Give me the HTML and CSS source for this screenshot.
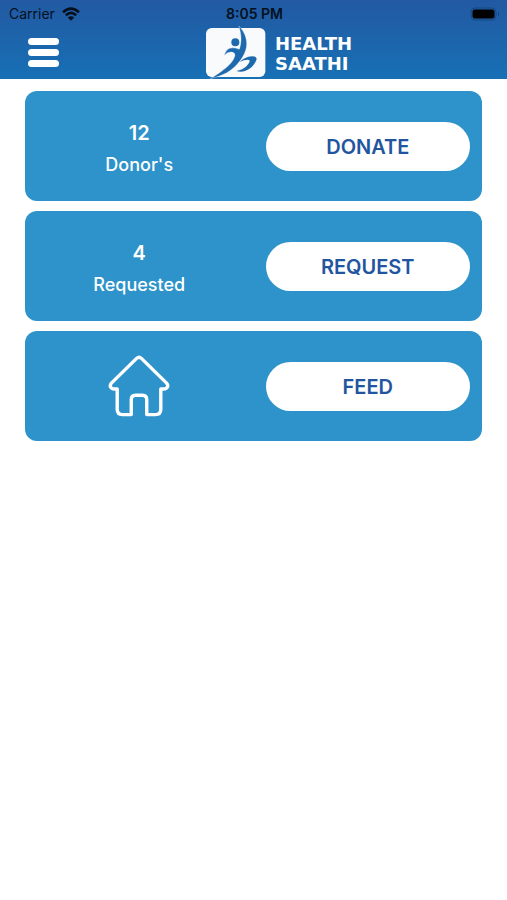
FILE: index.html
```html
<!DOCTYPE html>
<html lang="en">
<head>
<meta charset="utf-8">
<meta name="viewport" content="width=device-width, initial-scale=1">
<title>Health Saathi</title>
<link rel="stylesheet" href="styles.css">
</head>
<body>
<header class="header">
  <div class="status">
    <div class="carrier">
      <span>Carrier</span>
      <svg class="wifi" viewBox="0 0 18 14" aria-hidden="true">
        <path d="M1 5.200Q9-2 17 5.200M3.800 8.200Q9 3.600 14.200 8.200" fill="none" stroke="currentColor" stroke-width="2.500"/>
        <path d="M9 13.800 5.800 10.600Q9 8 12.200 10.600Z" fill="currentColor"/>
      </svg>
    </div>
    <time class="clock">8:05 PM</time>
    <svg class="battery" viewBox="0 0 30 14" aria-hidden="true">
      <rect x="1" y="1" width="25" height="12" rx="4" fill="none" stroke="#103f70" stroke-opacity=".7"/>
      <rect x="2.500" y="2.500" width="22" height="9" rx="2.500"/>
      <path d="M28 5q2 2 0 4z" fill="#103f70"/>
    </svg>
  </div>
  <div class="bar">
    <button class="menu" type="button" aria-label="Menu">
      <span class="line"></span><span class="line"></span><span class="line"></span>
    </button>
    <div class="brand">
      <svg class="mark" viewBox="30 33 183 159" aria-hidden="true">
        <rect x="33" y="39" width="178" height="147" rx="17" fill="#f8fafc"/>
        <path d="M131 32C139 56 141 79 133 103Q115 96 104 100Q92 105 88 121Q98 110 109 111Q120 112 120 121C116 140 98 156 78 170Q61 182 46 191Q71 186 94 174C119 160 143 134 152 106C161 77 149 50 131 32Z" fill="#1c69ae" stroke="#f8fafc" stroke-width="1"/>
        <path d="M134 141Q149 126 171 124Q190 124 183 137Q174 159 150 168Q137 173 124 168Q143 165 155 153Q168 139 162 135Q151 133 134 141Z" fill="#1c69ae"/>
        <circle cx="121" cy="82" r="12" fill="#1c69ae"/>
      </svg>
      <div class="name"><span>HEALTH</span><span>SAATHI</span></div>
    </div>
  </div>
</header>
<main class="cards">
  <section class="card">
    <div class="info"><strong class="count">12</strong><span class="label">Donor's</span></div>
    <div class="action"><button class="pill" type="button">DONATE</button></div>
  </section>
  <section class="card">
    <div class="info"><strong class="count">4</strong><span class="label">Requested</span></div>
    <div class="action"><button class="pill" type="button">REQUEST</button></div>
  </section>
  <section class="card">
    <div class="info">
      <svg class="home" viewBox="0 0 64 64" aria-hidden="true">
        <path d="M29.500 3.500Q32 1 34.500 3.500L60.500 29Q63 32 60.500 34Q59 35.500 54.500 35V56Q54.500 61.500 49 61.500H40V46Q40 41.500 35.500 41.500H28.500Q24 41.500 24 46V61.500H15Q9.500 61.500 9.500 56V35Q5 35.500 3.500 34Q1 32 3.500 29Z" fill="none" stroke="#fff" stroke-width="3.500" stroke-linejoin="round"/>
      </svg>
    </div>
    <div class="action"><button class="pill" type="button">FEED</button></div>
  </section>
</main>
</body>
</html>
```
FILE: styles.css
```css
* {
  box-sizing: border-box;
}

body {
  margin: 0;
  background: #fff;
  font-family: Inter, "Liberation Sans", sans-serif;
}

.header {
  background: linear-gradient(#2259a2, #1770b5);
}

.status {
  display: grid;
  grid-template-columns: 1fr auto 1fr;
  align-items: center;
  height: 26px;
  padding: 2px 7px 0 9px;
  font-size: 14px;
  line-height: 24px;
  color: #04101e;
}

.carrier {
  display: flex;
  align-items: center;
  gap: 7px;
}

.wifi {
  width: 18px;
  height: 14px;
}

.clock {
  font-weight: 600;
}

.battery {
  justify-self: end;
  width: 30px;
  height: 14px;
}

.bar {
  display: grid;
  grid-template-columns: 205px 1fr;
  align-items: center;
  height: 53px;
}

.menu {
  display: flex;
  flex-direction: column;
  gap: 4px;
  width: 31px;
  margin-left: 28px;
  padding: 0;
  border: 0;
  background: none;
}

.line {
  height: 7px;
  border-radius: 4px;
  background: #fff;
}

.brand {
  display: flex;
  align-items: center;
  gap: 9px;
}

.mark {
  width: 61px;
  height: 53px;
}

.name {
  display: flex;
  flex-direction: column;
  padding-top: 2px;
  font: bold 18px/20px "DejaVu Sans", sans-serif;
  color: #fff;
}

.cards {
  display: grid;
  gap: 10px;
  padding: 12px 25px;
}

.card {
  display: grid;
  grid-template-columns: 1fr 1fr;
  align-items: center;
  min-height: 110px;
  border-radius: 12px;
  background: #2d93ca;
}

.info {
  display: flex;
  flex-direction: column;
  align-items: center;
  color: #fff;
}

.count {
  padding-top: 5px;
  font-size: 20px;
  font-weight: 600;
  line-height: 32px;
}

.label {
  font-size: 18px;
  font-weight: 500;
  line-height: 32px;
}

.home {
  width: 62px;
  height: 62px;
}

.action {
  padding: 0 12px;
}

.pill {
  display: block;
  width: 100%;
  height: 49px;
  padding: 2px 0 0;
  border: 0;
  border-radius: 25px;
  background: #fff;
  color: #2255a0;
  font: 600 20px/24px Inter, "Liberation Sans", sans-serif;
}
```
